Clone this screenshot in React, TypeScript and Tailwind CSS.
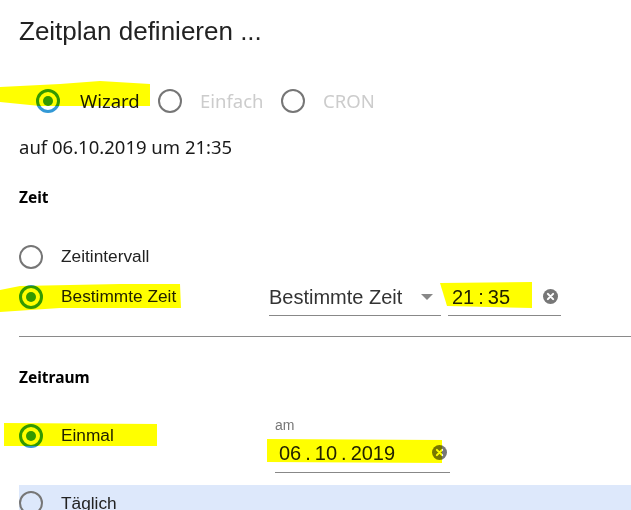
import React from "react";

function Radio({ checked = false }: { checked?: boolean }) {
  return checked ? (
    <span className="flex h-[24px] w-[24px] shrink-0 items-center justify-center rounded-full border-[3px] border-[#3399d6]">
      <span className="h-[10px] w-[10px] rounded-full bg-[#3399d6]" />
    </span>
  ) : (
    <span className="h-[24px] w-[24px] shrink-0 rounded-full border-[2.5px] border-[#767676]" />
  );
}

function ClearIcon() {
  return (
    <svg width="15" height="15" viewBox="0 0 16 16" className="shrink-0">
      <circle cx="8" cy="8" r="8" fill="#777" />
      <path d="M5.2 5.2 L10.8 10.8 M10.8 5.2 L5.2 10.8" stroke="#fff" strokeWidth="2.2" strokeLinecap="round" />
    </svg>
  );
}

export default function App() {
  return (
    <div className="relative h-[510px] w-[631px] overflow-hidden bg-white text-[#222] font-['Liberation_Sans',Arial,sans-serif]">
      <div className="flex flex-col pl-[19px]">
        <h1 className="mt-[13px] h-[36px] text-[26px] leading-[36px] font-normal">Zeitplan definieren ...</h1>

        <div className="mt-[37px] flex h-[30px] items-center pl-[17px] font-['Noto_Sans',sans-serif] text-[18.5px]">
          <div className="flex w-[122px] items-center">
            <Radio checked />
            <span className="ml-[20px] text-[#1a1a1a]">Wizard</span>
          </div>
          <div className="flex w-[123px] items-center">
            <Radio />
            <span className="ml-[18px] text-[#cccccc]">Einfach</span>
          </div>
          <div className="flex items-center">
            <Radio />
            <span className="ml-[18px] text-[#cccccc]">CRON</span>
          </div>
        </div>

        <div className="mt-[16px] h-[30px] font-['Noto_Sans',sans-serif] text-[18.5px] leading-[30px] text-[#1a1a1a]">
          auf 06.10.2019 um 21:35
        </div>

        <div className="mt-[23px] h-[24px] font-['Noto_Sans',sans-serif] text-[15.5px] font-bold leading-[24px] text-black">
          Zeit
        </div>

        <div className="mt-[33px] flex h-[30px] items-center text-[17.3px]">
          <Radio />
          <span className="ml-[18px]">Zeitintervall</span>
        </div>

        <div className="mt-[10px] flex h-[30px] items-center">
          <div className="flex w-[250px] items-center text-[17.3px]">
            <Radio checked />
            <span className="ml-[18px]">Bestimmte Zeit</span>
          </div>
          <div className="flex h-[38px] w-[172px] items-center border-b border-[#888] text-[20px] text-[#333]">
            <span>Bestimmte Zeit</span>
            <svg width="12" height="6" viewBox="0 0 12 6" className="ml-auto mr-[8px]">
              <path d="M0 0 L12 0 L6 6 Z" fill="#888" />
            </svg>
          </div>
          <div className="ml-[7px] flex h-[38px] w-[113px] items-center border-b border-[#888] pl-[4px] pr-[3px] text-[20px] text-[#222]">
            <span className="flex">
              <span>21</span>
              <span className="mx-[4px]">:</span>
              <span>35</span>
            </span>
            <span className="ml-auto">
              <ClearIcon />
            </span>
          </div>
        </div>

        <div className="mt-[24px] h-px bg-[#8a8a8a]" />

        <div className="mt-[28px] h-[24px] font-['Noto_Sans',sans-serif] text-[15.5px] font-bold leading-[24px] text-black">
          Zeitraum
        </div>

        <div className="mt-[16px] flex">
          <div className="flex h-[74px] w-[256px] items-start">
            <div className="mt-[16px] flex h-[30px] items-center text-[17.3px]">
              <Radio checked />
              <span className="ml-[18px]">Einmal</span>
            </div>
          </div>
          <div className="flex w-[175px] flex-col">
            <span className="mt-[12px] h-[16px] text-[14px] leading-[16px] text-[#777]">am</span>
            <div className="flex h-[40px] items-center border-b border-[#888] pl-[4px] pr-[3px] text-[20px] text-[#222]">
              <span className="flex">
                <span>06</span>
                <span className="mx-[4px]">.</span>
                <span>10</span>
                <span className="mx-[4px]">.</span>
                <span>2019</span>
              </span>
              <span className="ml-auto">
                <ClearIcon />
              </span>
            </div>
          </div>
        </div>

        <div className="mt-[6px] flex h-[40px] items-start bg-[#dde8fb] pt-[6px] text-[17.3px]">
          <Radio />
          <span className="ml-[18px]">Täglich</span>
        </div>
      </div>

      <svg
        className="pointer-events-none absolute inset-0 mix-blend-multiply"
        width="631"
        height="510"
        viewBox="0 0 631 510"
      >
        <g fill="#ffff00">
          <polygon points="0,87 60,84 100,81 150,84 150,106 40,106 0,102" />
          <polygon points="0,290 20,286 120,284 180,284 181,308 60,308 0,312" />
          <polygon points="440,283 532,282 532,308 447,306" />
          <polygon points="4,423 157,424 157,446 4,446" />
          <polygon points="267,439 442,440 442,463 267,462" />
        </g>
      </svg>
    </div>
  );
}
